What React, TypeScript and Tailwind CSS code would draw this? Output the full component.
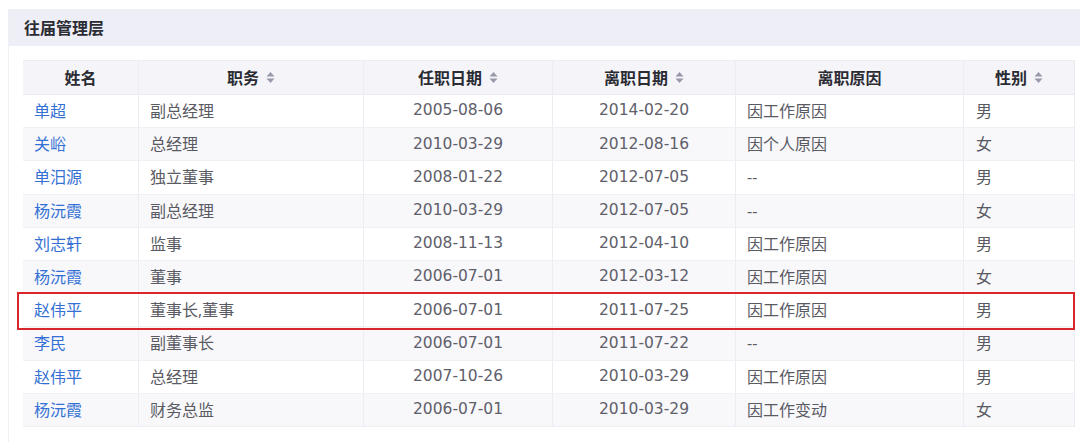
import React from 'react'

type Row = { name: string; post: string; start: string; end: string; reason: string; sex: string }

const rows: Row[] = [
  { name: '单超', post: '副总经理', start: '2005-08-06', end: '2014-02-20', reason: '因工作原因', sex: '男' },
  { name: '关峪', post: '总经理', start: '2010-03-29', end: '2012-08-16', reason: '因个人原因', sex: '女' },
  { name: '单汨源', post: '独立董事', start: '2008-01-22', end: '2012-07-05', reason: '--', sex: '男' },
  { name: '杨沅霞', post: '副总经理', start: '2010-03-29', end: '2012-07-05', reason: '--', sex: '女' },
  { name: '刘志轩', post: '监事', start: '2008-11-13', end: '2012-04-10', reason: '因工作原因', sex: '男' },
  { name: '杨沅霞', post: '董事', start: '2006-07-01', end: '2012-03-12', reason: '因工作原因', sex: '女' },
  { name: '赵伟平', post: '董事长,董事', start: '2006-07-01', end: '2011-07-25', reason: '因工作原因', sex: '男' },
  { name: '李民', post: '副董事长', start: '2006-07-01', end: '2011-07-22', reason: '--', sex: '男' },
  { name: '赵伟平', post: '总经理', start: '2007-10-26', end: '2010-03-29', reason: '因工作原因', sex: '男' },
  { name: '杨沅霞', post: '财务总监', start: '2006-07-01', end: '2010-03-29', reason: '因工作变动', sex: '女' },
]

const cols = ['w-[115px]', 'w-[225px]', 'w-[189px]', 'w-[183px]', 'w-[228px]', 'w-[112px]']

function SortIcon() {
  return (
    <svg width="9" height="13" viewBox="0 0 9 13" className="ml-[7px] inline-block">
      <path d="M4.5 1 L8.5 5.5 L0.5 5.5 Z" fill="#9898ab" />
      <path d="M4.5 12 L8.5 7.5 L0.5 7.5 Z" fill="#9898ab" />
    </svg>
  )
}

const font = "font-['Open_Sans','Noto_Sans_CJK_SC',sans-serif]"

export default function App() {
  const headers: { label: string; sort: boolean }[] = [
    { label: '姓名', sort: false },
    { label: '职务', sort: true },
    { label: '任职日期', sort: true },
    { label: '离职日期', sort: true },
    { label: '离职原因', sort: false },
    { label: '性别', sort: true },
  ]

  return (
    <div className={`w-[1080px] h-[442px] overflow-hidden bg-white pt-[9px] pl-[8px] ${font}`}>
      <div className="w-[1100px] h-[440px] border-l border-[#eef0f5]">
        <div className="h-[37px] bg-[#eeeff6] pl-[15px] flex items-center text-[16px] font-bold text-[#2b2b33]">
          往届管理层
        </div>
        <div className="pt-[14px] pl-[14px]">
          <div className="relative w-[1052px]">
            <div className="flex h-[35px] bg-[#f5f5f9] border-y border-[#ececf2]">
              {headers.map((h, i) => (
                <div
                  key={h.label}
                  className={`${cols[i]} flex items-center justify-center text-[16px] font-bold text-[#2b2b33] ${i > 0 ? 'border-l border-[#ececf2]' : ''} ${i === 5 ? 'border-r' : ''}`}
                >
                  {h.label}
                  {h.sort && <SortIcon />}
                </div>
              ))}
            </div>
            {rows.map((r, idx) => (
              <div
                key={idx}
                className={`flex h-[33.2px] text-[16px] text-[#5a5a63] border-b border-[#f0f0f4] ${idx % 2 === 1 ? 'bg-[#f8f8fb]' : 'bg-white'}`}
              >
                <div className={`${cols[0]} flex items-center pl-[11px] text-[#3470d4]`}>{r.name}</div>
                <div className={`${cols[1]} flex items-center pl-[11px] border-l border-[#ececf2]`}>{r.post}</div>
                <div className={`${cols[2]} flex items-center justify-center border-l border-[#ececf2] font-['DejaVu_Sans',sans-serif] text-[15.5px] text-[#60606a]`}>{r.start}</div>
                <div className={`${cols[3]} flex items-center justify-center border-l border-[#ececf2] font-['DejaVu_Sans',sans-serif] text-[15.5px] text-[#60606a]`}>{r.end}</div>
                <div className={`${cols[4]} flex items-center pl-[11px] border-l border-[#ececf2]`}>{r.reason}</div>
                <div className={`${cols[5]} flex items-center pl-[12px] border-x border-[#ececf2]`}>{r.sex}</div>
              </div>
            ))}
            <div className="absolute left-[-6px] top-[232px] w-[1058px] h-[38px] border-2 border-[#d8262c] pointer-events-none" />
          </div>
        </div>
      </div>
    </div>
  )
}
